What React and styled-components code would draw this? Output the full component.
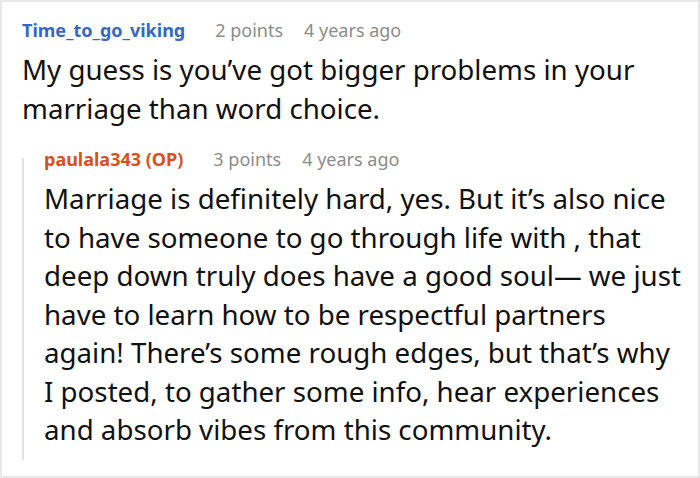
import styled, { createGlobalStyle } from 'styled-components'

const GlobalStyle = createGlobalStyle`
html, body {
  margin: 0;
  padding: 0;
  background: #fff;
}
`

const Frame = styled.div`
box-sizing: border-box;
width: 700px;
height: 478px;
overflow: hidden;
border: 2px solid #e8e8e8;
padding: 8px 14px 0 20px;
font-family: 'Noto Sans', 'Open Sans', sans-serif;
color: #111;
`

const Comment = styled.div`
display: flex;
flex-direction: column;
`

const Meta = styled.div`
display: flex;
align-items: baseline;
gap: 30px;
height: 40px;
line-height: 40px;
font-size: 18px;
`

const Author = styled.span`
font-weight: 700;
color: ${props => (props.$op ? '#dc4f1c' : '#3468c4')};
`

const Stat = styled.span`
color: #8c8c8c;
margin-left: ${props => (props.$tight ? '-9px' : '0')};
`

const Body = styled.p`
margin: 0;
font-size: 27.7px;
line-height: 38.5px;
`

const Replies = styled.div`
position: relative;
margin-top: 12px;
padding-left: 22px;

&::before {
  content: '';
  position: absolute;
  left: 0;
  top: 19px;
  width: 2px;
  height: 302px;
  background: #e2e2e2;
}
`

function CommentItem(props) {
  const { author, op, points, age, children } = props
  return (
    <Comment>
      <Meta>
        <Author $op={op}>{author}</Author>
        <Stat>{points}</Stat>
        <Stat $tight>{age}</Stat>
      </Meta>
      <Body>{children}</Body>
    </Comment>
  )
}

export default function App() {
  return (
    <>
      <GlobalStyle />
      <Frame>
        <CommentItem author="Time_to_go_viking" points="2 points" age="4 years ago">
          My guess is you’ve got bigger problems in your marriage than word choice.
        </CommentItem>
        <Replies>
          <CommentItem author="paulala343 (OP)" op points="3 points" age="4 years ago">
            Marriage is definitely hard, yes. But it’s also nice to have someone to go through life with , that deep down truly does have a good soul— we just have to learn how to be respectful partners again! There’s some rough edges, but that’s why I posted, to gather some info, hear experiences and absorb vibes from this community.
          </CommentItem>
        </Replies>
      </Frame>
    </>
  )
}
